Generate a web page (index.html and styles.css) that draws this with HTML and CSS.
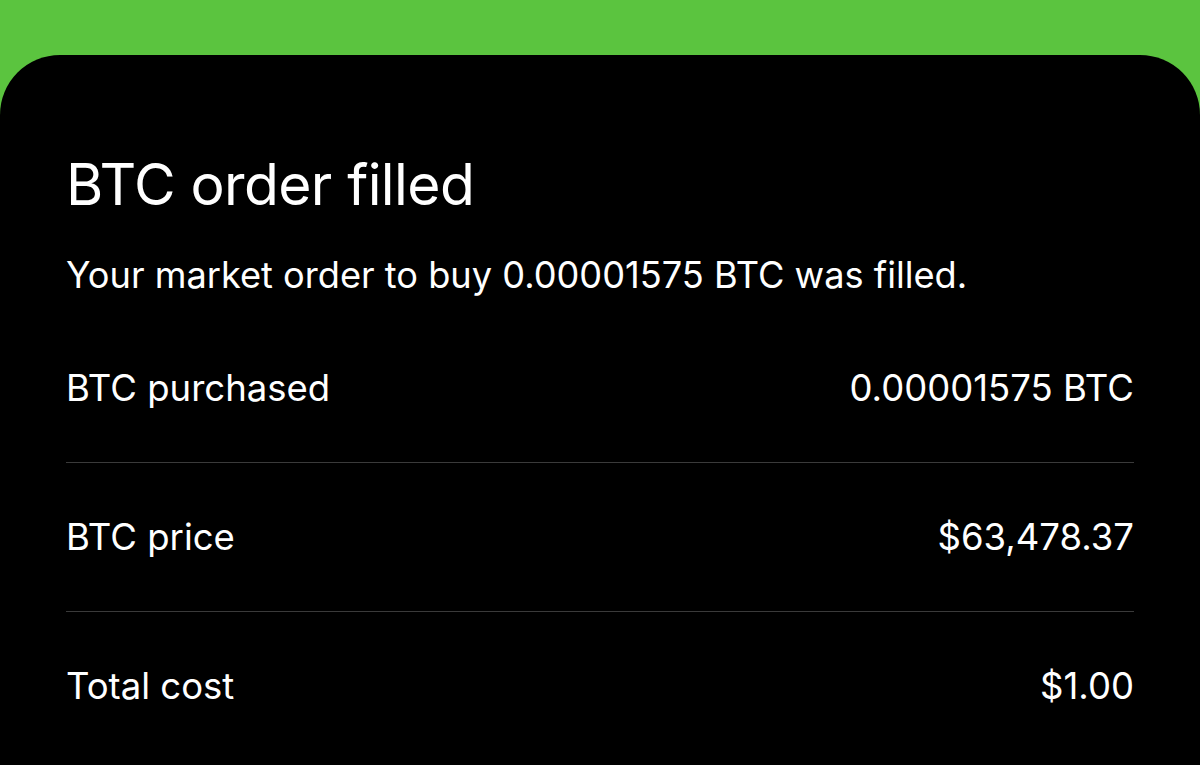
FILE: index.html
```html
<!DOCTYPE html>
<html lang="en">

<head>
    <meta charset="UTF-8">
    <meta name="viewport" content="width=device-width, initial-scale=1.0">
    <title>BTC order filled</title>
    <link rel="stylesheet" href="styles.css">
</head>

<body>
    <div class="sheet">
        <h1 class="title">BTC order filled</h1>
        <p class="summary">Your market order to buy 0.00001575 BTC was filled.</p>
        <div class="details">
            <div class="row">
                <span class="label">BTC purchased</span>
                <span class="value">0.00001575 BTC</span>
            </div>
            <div class="row">
                <span class="label">BTC price</span>
                <span class="value">$63,478.37</span>
            </div>
            <div class="row">
                <span class="label">Total cost</span>
                <span class="value">$1.00</span>
            </div>
        </div>
    </div>
</body>

</html>
```

FILE: styles.css
```css
body {
    margin: 0;
    background-color: #5bc43f;
    font-family: 'Inter', 'Liberation Sans', sans-serif;
    color: #fff;
    overflow: hidden;
}

.sheet {
    margin-top: 55px;
    min-height: 710px;
    background-color: #000;
    border-radius: 60px 60px 0 0;
    padding: 0 66px;
}

.title {
    margin: 0;
    padding-top: 100px;
    font-size: 57px;
    font-weight: 400;
    line-height: 60px;
    letter-spacing: -0.6px;
}

.summary {
    margin: 0;
    padding-top: 40px;
    font-size: 36.2px;
    line-height: 40px;
}

.details {
    margin-top: 19px;
}

.row {
    display: flex;
    justify-content: space-between;
    align-items: center;
    height: 148px;
    font-size: 36.5px;
    border-bottom: 1px solid #3a3a3a;
}

.row:last-child {
    border-bottom: none;
}
```
